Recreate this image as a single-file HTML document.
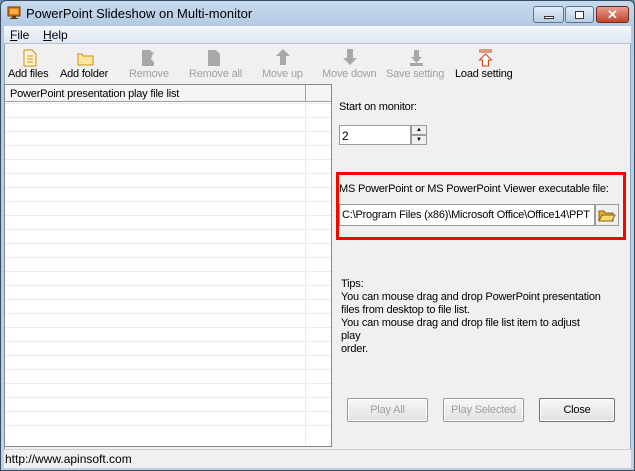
<!DOCTYPE html>
<html><head><style>
*{margin:0;padding:0;box-sizing:border-box}
body{width:635px;height:471px;overflow:hidden;background:#6f8fae;font-family:"Liberation Sans",sans-serif;font-size:11px;color:#000;position:relative}
.a{position:absolute}
.win{left:0;top:0;width:635px;height:471px;border:1px solid #3a4a5e;border-radius:6px 6px 0 0;background:linear-gradient(#c7daee,#b4cbe4 24px,#bcd1e8);}
.client{left:4px;top:26px;width:627px;height:442px;background:#f0f0f0;border:1px solid #8ea4bc}
.tb{color:#a0a0a0;text-align:center}
.btn{border:1px solid #9a9a9a;background:linear-gradient(#f6f6f6,#e2e2e2);border-radius:2px;text-align:center;line-height:22px;box-shadow:inset 0 0 0 1px #fff}
.n{letter-spacing:-0.2px}
</style></head><body>
<div class="a win"></div>
<svg class="a" style="left:7px;top:6px" width="14" height="14"><rect x="1" y="1" width="12" height="9" fill="#e07a10" stroke="#6a3a00"/><rect x="3" y="3" width="8" height="5" fill="#f8b040"/><rect x="5" y="10" width="4" height="2" fill="#6a3a00"/><rect x="3" y="12" width="8" height="1" fill="#6a3a00"/></svg>
<div class="a" style="left:26px;top:6px;font-size:13px;color:#000">PowerPoint Slideshow on Multi-monitor</div>
<div class="a" style="left:533px;top:6px;width:31px;height:17px;border:1px solid #5b7394;border-radius:3px;background:linear-gradient(#e2ecf7,#b9cde4)"><div class="a" style="left:10px;top:9px;width:10px;height:3px;background:#fff;border:1px solid #333"></div></div>
<div class="a" style="left:565px;top:6px;width:29px;height:17px;border:1px solid #5b7394;border-radius:3px;background:linear-gradient(#e2ecf7,#b9cde4)"><div class="a" style="left:9px;top:4px;width:9px;height:8px;border:1px solid #333;background:#fff"></div></div>
<div class="a" style="left:596px;top:6px;width:33px;height:17px;border:1px solid #6b2a20;border-radius:3px;background:linear-gradient(#e8a090,#c0442c);color:#fff;font-weight:bold;font-size:13px;text-align:center;line-height:15px">✕</div>
<div class="a client"></div>
<div class="a" style="left:4px;top:26px;width:627px;height:18px;background:linear-gradient(#f4f7fc,#dfe7f3);border-bottom:1px solid #b8c4d4"></div>
<div class="a" style="left:10px;top:28px;font-size:12px"><u>F</u>ile</div>
<div class="a" style="left:43px;top:28px;font-size:12px"><u>H</u>elp</div>
<svg class="a" style="left:0;top:48px" width="520" height="20">
<path d="M24 2h8l4 4v12H24z" fill="#fff6d8" stroke="#d08a10"/><path d="M27 8h6M27 11h6M27 14h6" stroke="#d08a10"/>
<path d="M78 6h4l1 2h10v9H78z" fill="#fbe8a0" stroke="#d09010"/>
<path d="M142 2h8l4 4v-3l-3 8 3 3v4H142z" fill="#a8a8a8"/>
<path d="M208 2h8l4 4v12H208z" fill="#a8a8a8"/>
<path d="M283 1l7 7h-4v9h-6V8h-4z" fill="#a8a8a8"/>
<path d="M347 1h6v9h4l-7 7-7-7h4z" fill="#a8a8a8"/>
<path d="M414 2h5v7h3l-5.5 6-5.5-6h3zM410 15h13v3h-13z" fill="#a8a8a8"/>
<path d="M479 2h13M479 4h13" stroke="#d04010"/><path d="M485.5 6l6 6h-3v6h-6v-6h-3z" fill="#fff" stroke="#d04010"/>
</svg>
<div class="a n" style="left:8px;top:68px">Add files</div>
<div class="a n" style="left:60px;top:68px">Add folder</div>
<div class="a tb n" style="left:129px;top:68px">Remove</div>
<div class="a tb n" style="left:189px;top:68px">Remove all</div>
<div class="a tb n" style="left:262px;top:68px">Move up</div>
<div class="a tb n" style="left:322px;top:68px">Move down</div>
<div class="a tb n" style="left:386px;top:68px">Save setting</div>
<div class="a n" style="left:455px;top:68px">Load setting</div>
<div class="a" style="left:4px;top:84px;width:328px;height:363px;background:#fff;border:1px solid #828790;overflow:hidden">
<div class="a" style="left:0;top:0;width:328px;height:17px;background:#f4f4f4;border-bottom:1px solid #a0a0a0"></div>
<div class="a" style="left:300px;top:0;width:1px;height:17px;background:#a0a0a0"></div>
<div class="a n" style="left:5px;top:3px">PowerPoint presentation play file list</div>
<div class="a" style="left:0;top:17px;width:328px;height:346px;background:repeating-linear-gradient(#fff 0 13px,#ececec 13px 14px);background-position:0 -12px"></div>
<div class="a" style="left:300px;top:17px;width:1px;height:346px;background:#ececec"></div>
</div>
<div class="a n" style="left:339px;top:101px">Start on monitor:</div>
<div class="a" style="left:339px;top:125px;width:72px;height:20px;background:#fff;border:1px solid #9a9a9a;padding:3px 2px;font-size:12px">2</div>
<div class="a" style="left:411px;top:125px;width:16px;height:10px;border:1px solid #9a9a9a;background:#f0f0f0;font-size:6px;text-align:center;line-height:8px">▲</div>
<div class="a" style="left:411px;top:135px;width:16px;height:10px;border:1px solid #9a9a9a;background:#f0f0f0;font-size:6px;text-align:center;line-height:8px">▼</div>
<div class="a" style="left:336px;top:172px;width:290px;height:68px;border:3px solid #f00"></div>
<div class="a n" style="left:339px;top:183px">MS PowerPoint or MS PowerPoint Viewer executable file:</div>
<div class="a n" style="left:339px;top:204px;width:256px;height:22px;background:#fff;border:1px solid #9a9a9a;padding:4px 2px;overflow:hidden;white-space:nowrap">C:\Program Files (x86)\Microsoft Office\Office14\PPT</div>
<div class="a" style="left:595px;top:204px;width:24px;height:22px;border:1px solid #9a9a9a;background:#f0f0f0"><svg width="22" height="20"><path d="M3 6h5l1 2h8v8H3z" fill="#e8b030" stroke="#8a6010"/><path d="M3 16l3-6h13l-3 6z" fill="#f8d870" stroke="#8a6010"/></svg></div>
<div class="a n" style="left:341px;top:278px;line-height:13px">Tips:<br>You can mouse drag and drop PowerPoint presentation<br>files from desktop to file list.<br>You can mouse drag and drop file list item to adjust<br>play<br>order.</div>
<div class="a btn n" style="left:347px;top:398px;width:81px;height:24px;color:#a0a0a0">Play All</div>
<div class="a btn n" style="left:443px;top:398px;width:81px;height:24px;color:#a0a0a0">Play Selected</div>
<div class="a btn n" style="left:539px;top:398px;width:76px;height:24px;border-color:#707070">Close</div>
<div class="a" style="left:4px;top:449px;width:627px;height:19px;background:#f0f0f0;border-top:1px solid #d0d0d0"></div>
<div class="a" style="left:5px;top:452px;font-size:12px">http://www.apinsoft.com</div>
</body></html>
